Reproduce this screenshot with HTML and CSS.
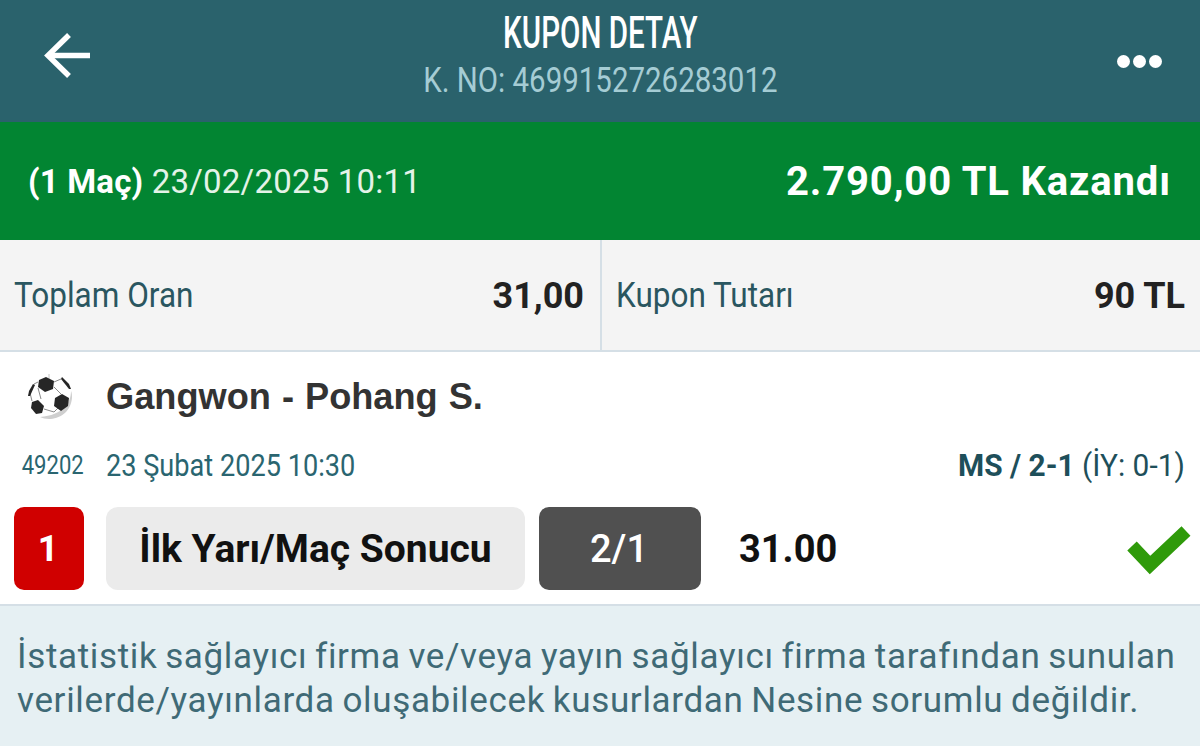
FILE: index.html
```html
<!DOCTYPE html>
<html lang="tr">
<head>
    <meta charset="UTF-8">
    <meta name="viewport" content="width=device-width, initial-scale=1.0">
    <title>Kupon Detay</title>
    <link rel="stylesheet" href="styles.css">
</head>
<body>
    <header class="topbar">
        <svg class="back-icon" viewBox="0 0 48 48" width="48" height="48" fill="none" stroke="#fff" stroke-width="5.500">
            <path d="M47 23.500H5"/>
            <path d="M26 3 5 23.500 26 44"/>
        </svg>
        <div class="topbar-title">
            <div class="title">KUPON DETAY</div>
            <div class="coupon-no">K. NO: 4699152726283012</div>
        </div>
        <div class="dots"><span></span><span></span><span></span></div>
    </header>

    <section class="status">
        <div class="status-date"><b>(1 Maç)</b> 23/02/2025 10:11</div>
        <div class="status-win">2.790,00 TL Kazandı</div>
    </section>

    <section class="totals">
        <div class="total-cell">
            <span class="total-label">Toplam Oran</span>
            <span class="total-value">31,00</span>
        </div>
        <div class="total-cell">
            <span class="total-label">Kupon Tutarı</span>
            <span class="total-value">90 TL</span>
        </div>
    </section>

    <section class="match">
        <div class="match-head">
            <svg class="ball" viewBox="0 0 48 48" width="48" height="48">
                <circle cx="24" cy="25" r="22" fill="#fff"/>
                <path d="M14 44c10 5 30 1 32-19 0-3 0-5-1-7 0 12-8 24-31 26z" fill="#cfcfcf"/>
                <path d="M23 1v5" stroke="#c4c4c4" stroke-width="1"/>
                <g stroke="#8a8a8a" stroke-width="1" fill="none">
                    <path d="M12 15 15 26M28 14l7 7M18 36l10 3M28 39l4-4M28 9l7-3M12 9 8 11M4 20l2 8"/>
                </g>
                <g fill="#262626">
                    <path d="M20 4l8 4-1 8-8 3-7-5 1-7z"/>
                    <path d="M36 21l7 4-1 8-7 5-7-5 1-8z"/>
                    <path d="M12 27l6 6-2 7-6 1-5-6 1-6z"/>
                    <path d="M36 4l7 7 2 5-2 0-8-10z"/>
                    <path d="M7 11 3 18l-1 5 2 0 5-11z"/>
                </g>
            </svg>
            <span class="teams">Gangwon - Pohang S.</span>
        </div>
        <div class="match-info">
            <span class="match-code">49202</span>
            <span class="match-date">23 Şubat 2025 10:30</span>
            <span class="match-score"><b>MS / 2-1</b> (İY: 0-1)</span>
        </div>
        <div class="bet-row">
            <div class="bet-no">1</div>
            <div class="bet-type">İlk Yarı/Maç Sonucu</div>
            <div class="bet-pick">2/1</div>
            <div class="bet-odd">31.00</div>
            <svg class="check" viewBox="0 0 66 50" width="66" height="50">
                <path d="M6 21 24 40 60 6" fill="none" stroke="#2f9a0a" stroke-width="13"/>
            </svg>
        </div>
    </section>

    <footer class="note">
        İstatistik sağlayıcı firma ve/veya yayın sağlayıcı firma tarafından sunulan verilerde/yayınlarda oluşabilecek kusurlardan Nesine sorumlu değildir.
    </footer>
</body>
</html>
```

FILE: styles.css
```css
body {
    margin: 0;
    font-family: Roboto, "Liberation Sans", sans-serif;
    background-color: #fff;
    height: 746px;
    overflow: hidden;
}

/* Üst bar */
.topbar {
    height: 122px;
    background-color: #2a626c;
    display: flex;
    align-items: center;
    justify-content: space-between;
    padding: 0 38px 10px 43px;
    box-sizing: border-box;
}

.back-icon {
    flex-shrink: 0;
    width: 48px;
    height: 48px;
}

.topbar-title {
    text-align: center;
    align-self: flex-start;
    margin-top: 9px;
}

.title {
    color: #fff;
    font-size: 44px;
    line-height: 48px;
    font-weight: 500;
    transform: scaleX(0.672);
}

.coupon-no {
    color: #a5ccd4;
    font-size: 35px;
    line-height: 40px;
    margin-top: 4px;
    transform: scaleX(0.842);
    white-space: nowrap;
}

.dots {
    display: flex;
    gap: 3px;
    margin-left: 8px;
    margin-top: 10px;
}

.dots span {
    width: 13px;
    height: 13px;
    border-radius: 50%;
    background-color: #fff;
}

/* Kazanç satırı */
.status {
    height: 118px;
    background-color: #028532;
    color: #fff;
    display: flex;
    align-items: center;
    justify-content: space-between;
    padding: 0 29px 0 28px;
}

.status-date {
    font-size: 33px;
    letter-spacing: 0.2px;
    color: #e4f3e8;
}

.status-date b {
    font-weight: 700;
    color: #fff;
}

.status-win {
    font-size: 40px;
    font-weight: 700;
    letter-spacing: 0.85px;
}

/* Toplam oran / kupon tutarı */
.totals {
    height: 110px;
    background-color: #f4f4f4;
    display: grid;
    grid-template-columns: 602px 1fr;
    border-bottom: 2px solid #d5dfe6;
}

.total-cell {
    display: flex;
    align-items: center;
    justify-content: space-between;
    padding: 0 15px 0 14px;
}

.total-cell:first-child {
    border-right: 2px solid #d5dfe6;
    padding-right: 16px;
}

.total-label {
    font-size: 35px;
    color: #2a5660;
    transform: scaleX(0.9);
    transform-origin: left center;
}

.total-value {
    font-size: 36px;
    font-weight: 700;
    color: #222;
    padding-top: 2px;
}

/* Maç */
.match {
    height: 252px;
    border-bottom: 2px solid #d5dfe6;
    box-sizing: content-box;
    padding: 0 15px 0 14px;
}

.match-head {
    height: 92px;
    display: flex;
    align-items: center;
    gap: 32px;
    padding-left: 12px;
    box-sizing: border-box;
}

.ball {
    flex-shrink: 0;
    margin-bottom: 2px;
}

.teams {
    font-family: "Liberation Sans", Arial, sans-serif;
    font-size: 36.2px;
    font-weight: 700;
    word-spacing: 1px;
    color: #333;
    padding-bottom: 2px;
}

.match-info {
    height: 42px;
    display: flex;
    align-items: center;
    color: #2a6570;
}

.match-code {
    font-size: 26px;
    width: 92px;
    padding-left: 9px;
    box-sizing: border-box;
    transform: scaleX(0.85);
    transform-origin: left center;
}

.match-date {
    font-size: 32px;
    flex: 1;
    transform: scaleX(0.848);
    transform-origin: left center;
}

.match-score {
    font-size: 32px;
    color: #1e4f5a;
    transform: scaleX(0.934);
    transform-origin: right center;
}

.bet-row {
    display: flex;
    align-items: center;
    height: 83px;
    margin-top: 21px;
}

.bet-no {
    width: 70px;
    height: 83px;
    border-radius: 10px;
    background-color: #d00000;
    color: #fff;
    font-size: 36px;
    font-weight: 700;
    display: flex;
    align-items: center;
    justify-content: center;
    padding-right: 2px;
    box-sizing: border-box;
}

.bet-type {
    width: 419px;
    height: 83px;
    margin-left: 22px;
    border-radius: 12px;
    background-color: #ebebeb;
    color: #111;
    font-size: 39px;
    font-weight: 700;
    display: flex;
    align-items: center;
    justify-content: center;
}

.bet-pick {
    width: 162px;
    height: 83px;
    margin-left: 14px;
    border-radius: 10px;
    background-color: #505050;
    color: #fff;
    font-size: 38px;
    font-weight: 500;
    display: flex;
    align-items: center;
    justify-content: center;
    padding-right: 2px;
    box-sizing: border-box;
}

.bet-odd {
    margin-left: 38px;
    font-size: 38px;
    font-weight: 700;
    color: #111;
    flex: 1;
}

.check {
    flex-shrink: 0;
    margin-right: -7px;
    margin-top: 2px;
}

/* Alt bilgi */
.note {
    height: 140px;
    background-color: #e6f0f3;
    color: #3f6a76;
    font-size: 35px;
    letter-spacing: 0.66px;
    word-spacing: -1.6px;
    line-height: 44px;
    padding: 29px 0 0 17px;
    box-sizing: border-box;
}
```
